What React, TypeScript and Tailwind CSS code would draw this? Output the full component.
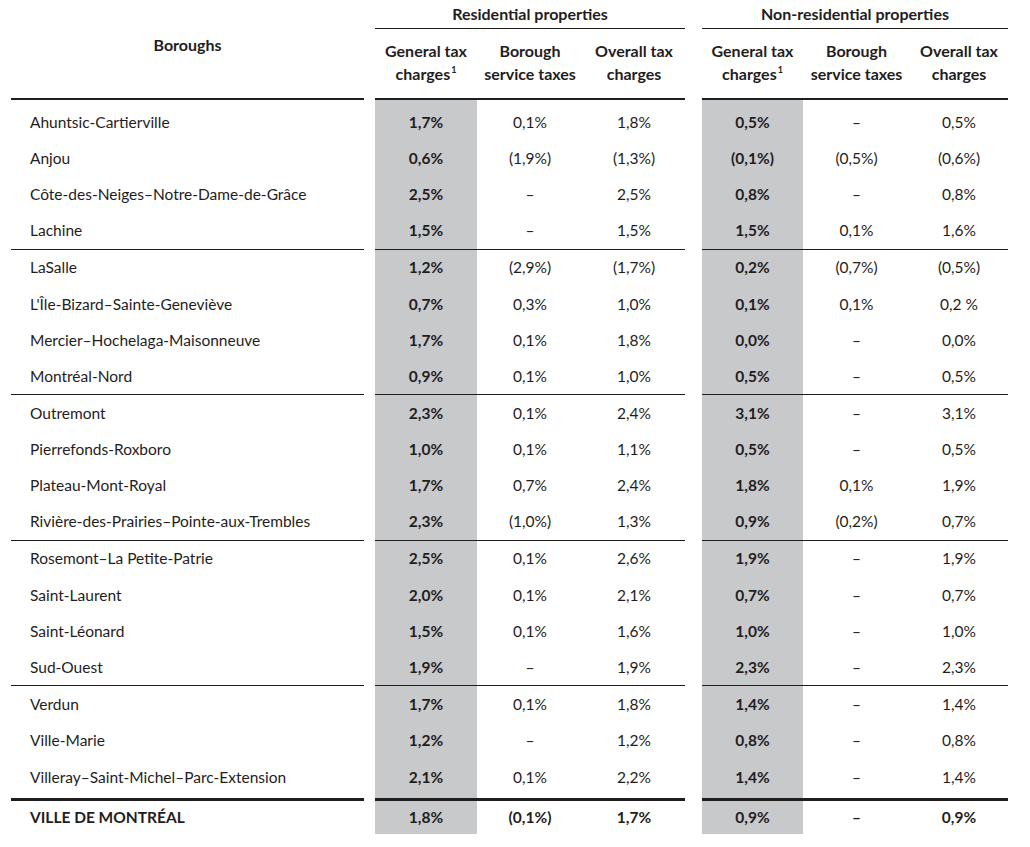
import React from 'react';

const rows: string[][] = [
  ["Ahuntsic-Cartierville", "1,7%", "0,1%", "1,8%", "0,5%", "–", "0,5%"],
  ["Anjou", "0,6%", "(1,9%)", "(1,3%)", "(0,1%)", "(0,5%)", "(0,6%)"],
  ["Côte-des-Neiges–Notre-Dame-de-Grâce", "2,5%", "–", "2,5%", "0,8%", "–", "0,8%"],
  ["Lachine", "1,5%", "–", "1,5%", "1,5%", "0,1%", "1,6%"],
  ["LaSalle", "1,2%", "(2,9%)", "(1,7%)", "0,2%", "(0,7%)", "(0,5%)"],
  ["L'Île-Bizard–Sainte-Geneviève", "0,7%", "0,3%", "1,0%", "0,1%", "0,1%", "0,2 %"],
  ["Mercier–Hochelaga-Maisonneuve", "1,7%", "0,1%", "1,8%", "0,0%", "–", "0,0%"],
  ["Montréal-Nord", "0,9%", "0,1%", "1,0%", "0,5%", "–", "0,5%"],
  ["Outremont", "2,3%", "0,1%", "2,4%", "3,1%", "–", "3,1%"],
  ["Pierrefonds-Roxboro", "1,0%", "0,1%", "1,1%", "0,5%", "–", "0,5%"],
  ["Plateau-Mont-Royal", "1,7%", "0,7%", "2,4%", "1,8%", "0,1%", "1,9%"],
  ["Rivière-des-Prairies–Pointe-aux-Trembles", "2,3%", "(1,0%)", "1,3%", "0,9%", "(0,2%)", "0,7%"],
  ["Rosemont–La Petite-Patrie", "2,5%", "0,1%", "2,6%", "1,9%", "–", "1,9%"],
  ["Saint-Laurent", "2,0%", "0,1%", "2,1%", "0,7%", "–", "0,7%"],
  ["Saint-Léonard", "1,5%", "0,1%", "1,6%", "1,0%", "–", "1,0%"],
  ["Sud-Ouest", "1,9%", "–", "1,9%", "2,3%", "–", "2,3%"],
  ["Verdun", "1,7%", "0,1%", "1,8%", "1,4%", "–", "1,4%"],
  ["Ville-Marie", "1,2%", "–", "1,2%", "0,8%", "–", "0,8%"],
  ["Villeray–Saint-Michel–Parc-Extension", "2,1%", "0,1%", "2,2%", "1,4%", "–", "1,4%"],
];

const total = ["VILLE DE MONTRÉAL", "1,8%", "(0,1%)", "1,7%", "0,9%", "–", "0,9%"];

// column widths: name, res x3, non-res x3
const widths = ["w-[353px]", "w-[102px]", "w-[106px]", "w-[102px]", "w-[101px]", "w-[107px]", "w-[98px]"];
const gray = [false, true, false, false, true, false, false];

function Cells({ values, className, bold }: { values: string[]; className: string; bold?: boolean }) {
  const cell = (i: number) => (
    <div
      key={i}
      className={`${widths[i]} ${className} ${gray[i] ? "bg-[#c8c9cb] font-bold" : ""} ${bold ? "font-bold" : ""} flex items-center ${i === 0 ? "pl-[19px]" : "justify-center"}`}
    >
      {values[i]}
    </div>
  );
  return (
    <div className="flex">
      <div className="w-[11px]" />
      {cell(0)}
      <div className="w-[11px]" />
      {cell(1)}
      {cell(2)}
      {cell(3)}
      <div className="w-[17px]" />
      {cell(4)}
      {cell(5)}
      {cell(6)}
    </div>
  );
}

function SubHead({ w, top, bottom, sup }: { w: string; top: string; bottom: string; sup?: boolean }) {
  return (
    <div className={`${w} flex flex-col items-center pt-[10px] leading-[23px]`}>
      <span>{top}</span>
      <span>
        {bottom}
        {sup && <sup className="text-[9px] relative -top-[7px] ml-[1px]">1</sup>}
      </span>
    </div>
  );
}

function GroupHead({ title, ws }: { title: string; ws: string[] }) {
  return (
    <div className="flex flex-col border-b-2 border-[#1f1d1e]">
      <div className="h-[29px] border-b border-[#1f1d1e] flex items-start justify-center pt-[2px]">{title}</div>
      <div className="flex h-[69px]">
        <SubHead w={ws[0]} top="General tax" bottom="charges" sup />
        <SubHead w={ws[1]} top="Borough" bottom="service taxes" />
        <SubHead w={ws[2]} top="Overall tax" bottom="charges" />
      </div>
    </div>
  );
}

export default function App() {
  const blank = ["", "", "", "", "", "", ""];
  return (
    <div className="w-[1030px] h-[847px] bg-white text-[#1f1d1e] text-[15.5px] font-['Lato',sans-serif] overflow-hidden">
      {/* header */}
      <div className="flex font-bold text-[16px]">
        <div className="w-[11px]" />
        <div className="w-[353px] h-[100px] border-b-2 border-[#1f1d1e] flex justify-center pt-[33px]">Boroughs</div>
        <div className="w-[11px]" />
        <GroupHead title="Residential properties" ws={["w-[102px]", "w-[106px]", "w-[102px]"]} />
        <div className="w-[17px]" />
        <GroupHead title="Non-residential properties" ws={["w-[101px]", "w-[107px]", "w-[98px]"]} />
      </div>

      {/* body */}
      <Cells values={blank} className="h-[4px]" />
      {rows.map((r, idx) => {
        const groupEnd = idx % 4 === 3 && idx < 16;
        return (
          <Cells
            key={r[0]}
            values={r}
            className={`h-[36.4px] ${groupEnd ? "border-b border-[#1f1d1e]" : ""}`}
          />
        );
      })}
      <Cells values={blank} className="h-[3px]" />
      <Cells values={total} className="h-[36px] border-t-[3px] border-[#1f1d1e]" bold />
    </div>
  );
}
